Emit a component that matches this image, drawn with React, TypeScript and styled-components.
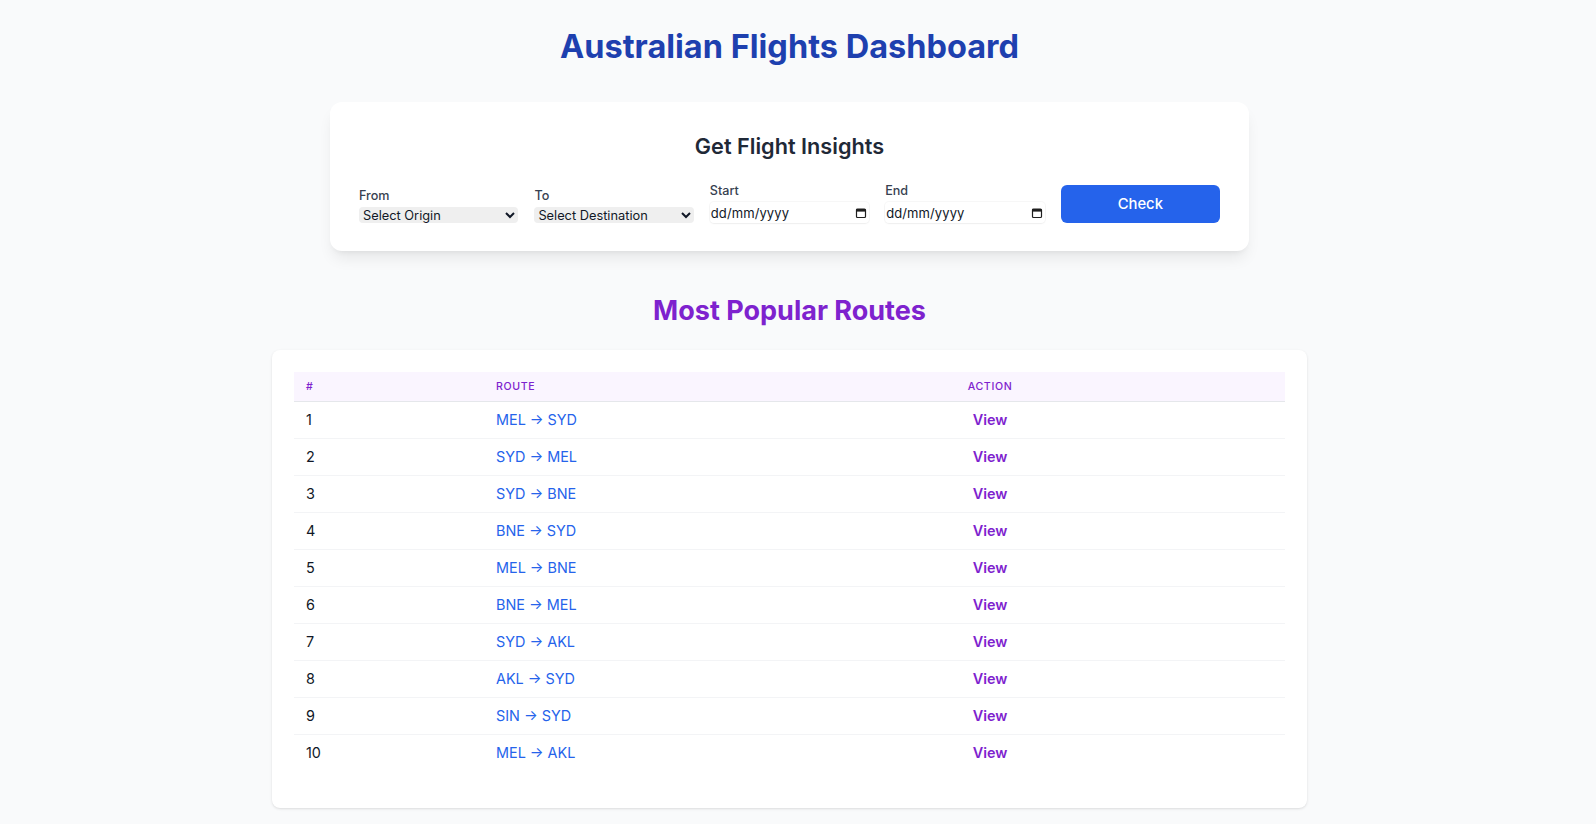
import React from "react";
import styled, { createGlobalStyle } from "styled-components";

const GlobalStyle = createGlobalStyle`
  * { box-sizing: border-box; }
  html, body { margin: 0; padding: 0; }
  body {
    background: #f9fafb;
    font-family: Inter, "Noto Sans", Arial, sans-serif;
    color: #111827;
  }
`;

const Page = styled.main`
  display: flex;
  flex-direction: column;
  align-items: center;
  padding: 29px 17px 32px 0;
`;

const Title = styled.h1`
  margin: 0 0 37px;
  font-size: 32.5px;
  line-height: 36px;
  font-weight: 700;
  color: #1e40af;
`;

const InsightCard = styled.section`
  width: 919px;
  background: #ffffff;
  border-radius: 12px;
  box-shadow: 0 10px 15px -3px rgba(0, 0, 0, 0.08), 0 4px 6px -4px rgba(0, 0, 0, 0.08);
  padding: 30px 29px 28px;
`;

const CardHeading = styled.h2`
  margin: 0 0 23px;
  text-align: center;
  font-size: 21.7px;
  line-height: 28px;
  font-weight: 600;
  color: #1f2937;
`;

const FormRow = styled.div`
  display: grid;
  grid-template-columns: repeat(5, 1fr);
  gap: 16px;
  align-items: end;
`;

const Field = styled.label`
  display: flex;
  flex-direction: column;
  gap: 3px;
`;

const FieldLabel = styled.span`
  font-size: 12.6px;
  line-height: 16px;
  font-weight: 500;
  color: #374151;
`;

const Select = styled.select`
  height: 16px;
  width: 100%;
  border: none;
  border-radius: 4px;
  background-color: #efefef;
  font-family: Inter, Arial, sans-serif;
  font-size: 12.8px;
  color: #111827;
  padding: 0;
  outline: none;
`;

const DateField = styled.div`
  height: 21px;
  display: flex;
  align-items: center;
  justify-content: space-between;
  padding: 1px 2px 0 1px;
  border-radius: 4px;
  background: #ffffff;
  box-shadow: 0 0 0 1px rgba(0, 0, 0, 0.03), 0 1px 2px rgba(0, 0, 0, 0.04);
  font-size: 13px;
  color: #111827;
  letter-spacing: 0.1px;
`;

const CheckButton = styled.button`
  height: 38px;
  width: 100%;
  border: none;
  border-radius: 6px;
  background: #2563eb;
  color: #ffffff;
  font-family: Inter, Arial, sans-serif;
  font-size: 14.8px;
  font-weight: 500;
  cursor: pointer;
`;

const SectionTitle = styled.h2`
  margin: 44px 0 23px;
  font-size: 27px;
  line-height: 32px;
  font-weight: 700;
  color: #7e22ce;
`;

const TableCard = styled.section`
  width: 1035px;
  background: #ffffff;
  border-radius: 8px;
  box-shadow: 0 1px 3px rgba(0, 0, 0, 0.1), 0 1px 2px -1px rgba(0, 0, 0, 0.08);
  padding: 22px 22px 37px;
`;

const Table = styled.table`
  width: 991px;
  border-collapse: collapse;
  table-layout: fixed;
`;

const HeadRow = styled.tr`
  background: #faf5ff;
  border-bottom: 1px solid #e5e7eb;
`;

const Th = styled.th<{ $align?: string }>`
  padding: 7px 12px;
  font-size: 10.6px;
  line-height: 15px;
  font-weight: 500;
  letter-spacing: 0.06em;
  text-transform: uppercase;
  color: #7e22ce;
  text-align: ${(p) => p.$align || "left"};
`;

const BodyRow = styled.tr`
  border-bottom: 1px solid #f3f4f6;
  &:last-child { border-bottom: none; }
`;

const Td = styled.td<{ $align?: string }>`
  padding: 8px 12px;
  font-size: 14.4px;
  line-height: 20px;
  text-align: ${(p) => p.$align || "left"};
`;

const RouteLink = styled.span`
  color: #2563eb;
`;

const ViewLink = styled.span`
  color: #7e22ce;
  font-weight: 600;
`;

const CalendarIcon = () => (
  <svg width="12" height="12" viewBox="0 0 12 12" aria-hidden="true">
    <rect x="1.5" y="2" width="9" height="8.5" rx="1" fill="none" stroke="#1f1f1f" strokeWidth="1.2" />
    <rect x="1.5" y="2" width="9" height="2.6" fill="#1f1f1f" />
  </svg>
);

const routes = [
  "MEL → SYD",
  "SYD → MEL",
  "SYD → BNE",
  "BNE → SYD",
  "MEL → BNE",
  "BNE → MEL",
  "SYD → AKL",
  "AKL → SYD",
  "SIN → SYD",
  "MEL → AKL",
];

export default function App() {
  return (
    <>
      <GlobalStyle />
      <Page>
        <Title>Australian Flights Dashboard</Title>
        <InsightCard>
          <CardHeading>Get Flight Insights</CardHeading>
          <FormRow>
            <Field>
              <FieldLabel>From</FieldLabel>
              <Select defaultValue="">
                <option value="">Select Origin</option>
              </Select>
            </Field>
            <Field>
              <FieldLabel>To</FieldLabel>
              <Select defaultValue="">
                <option value="">Select Destination</option>
              </Select>
            </Field>
            <Field>
              <FieldLabel>Start</FieldLabel>
              <DateField>
                <span>dd/mm/yyyy</span>
                <CalendarIcon />
              </DateField>
            </Field>
            <Field>
              <FieldLabel>End</FieldLabel>
              <DateField>
                <span>dd/mm/yyyy</span>
                <CalendarIcon />
              </DateField>
            </Field>
            <CheckButton type="button">Check</CheckButton>
          </FormRow>
        </InsightCard>

        <SectionTitle>Most Popular Routes</SectionTitle>
        <TableCard>
          <Table>
            <colgroup>
              <col style={{ width: 190 }} />
              <col style={{ width: 211 }} />
              <col style={{ width: 590 }} />
            </colgroup>
            <thead>
              <HeadRow>
                <Th>#</Th>
                <Th>Route</Th>
                <Th $align="center">Action</Th>
              </HeadRow>
            </thead>
            <tbody>
              {routes.map((r, i) => (
                <BodyRow key={r}>
                  <Td>{i + 1}</Td>
                  <Td>
                    <RouteLink>{r}</RouteLink>
                  </Td>
                  <Td $align="center">
                    <ViewLink>View</ViewLink>
                  </Td>
                </BodyRow>
              ))}
            </tbody>
          </Table>
        </TableCard>
      </Page>
    </>
  );
}
